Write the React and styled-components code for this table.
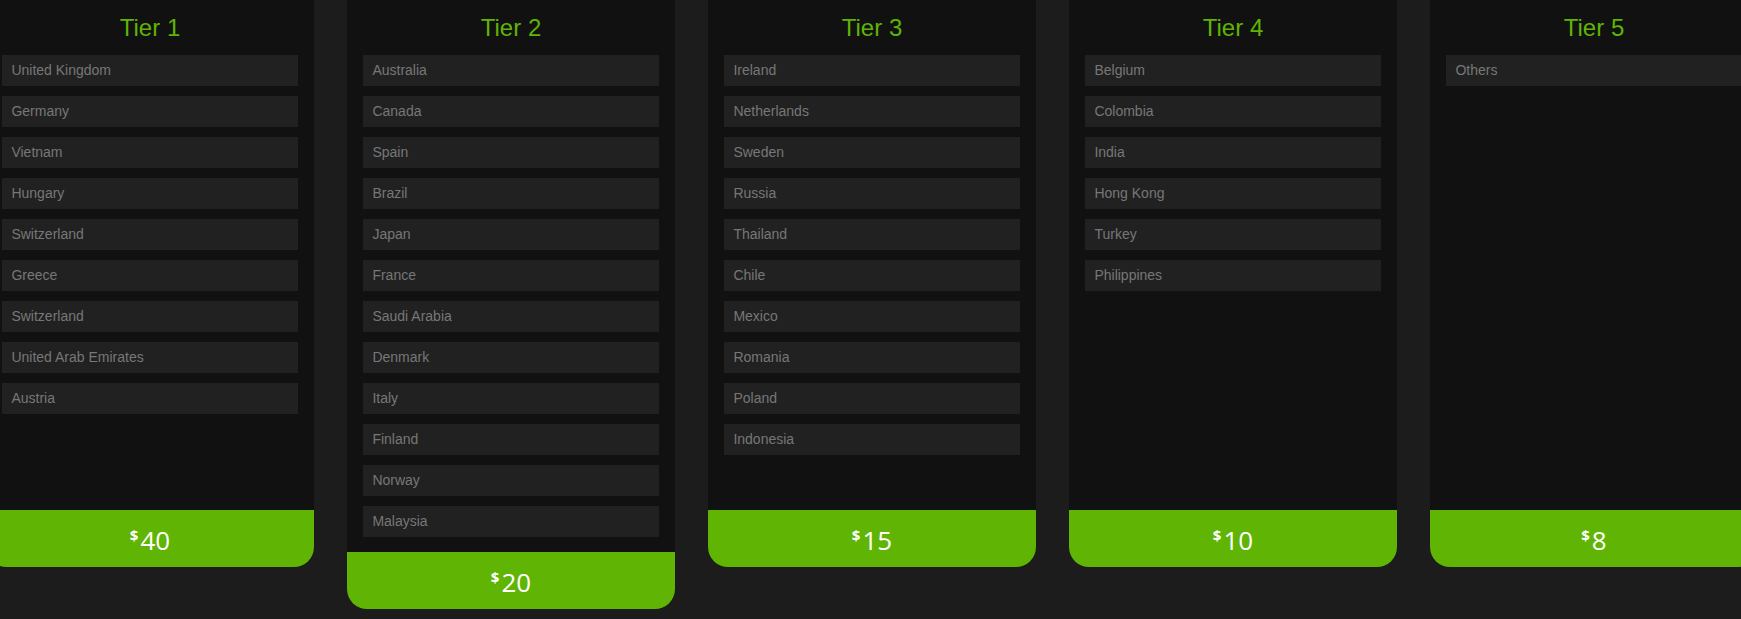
import React from 'react';
import styled, { createGlobalStyle } from 'styled-components';

const GlobalStyle = createGlobalStyle`
    body{
        margin: 0;
        background: #1c1c1c;
        font-family: "Liberation Sans", Arial, sans-serif;
        overflow: hidden;
    }
`;

const tiers = [
    { name: 'Tier 1', price: 40, countries: ['United Kingdom', 'Germany', 'Vietnam', 'Hungary', 'Switzerland', 'Greece', 'Switzerland', 'United Arab Emirates', 'Austria'] },
    { name: 'Tier 2', price: 20, countries: ['Australia', 'Canada', 'Spain', 'Brazil', 'Japan', 'France', 'Saudi Arabia', 'Denmark', 'Italy', 'Finland', 'Norway', 'Malaysia'] },
    { name: 'Tier 3', price: 15, countries: ['Ireland', 'Netherlands', 'Sweden', 'Russia', 'Thailand', 'Chile', 'Mexico', 'Romania', 'Poland', 'Indonesia'] },
    { name: 'Tier 4', price: 10, countries: ['Belgium', 'Colombia', 'India', 'Hong Kong', 'Turkey', 'Philippines'] },
    { name: 'Tier 5', price: 8, countries: ['Others'] },
];

function App() {
    return (
        <>
            <GlobalStyle />
            <Row>
                {tiers.map((tier) => {
                    return (
                        <Card key={tier.name}>
                            <Title>{tier.name}</Title>
                            <List>
                                {tier.countries.map((country, i) => (
                                    <Country key={i}>{country}</Country>
                                ))}
                            </List>
                            <Price>
                                <sup>$</sup>{tier.price}
                            </Price>
                        </Card>
                    )
                })}
            </Row>
        </>
    )
}

const Row = styled.div`
    display: flex;
    align-items: flex-start;
    gap: 33px;
    margin-left: -14px;
`;

const Card = styled.div`
    flex: 0 0 328px;
    min-height: 567px;
    background: #111111;
    display: flex;
    flex-direction: column;
    border-radius: 0 0 20px 20px;
`;

const Title = styled.h2`
    margin: 14px 0 13px;
    font-size: 24px;
    line-height: 28px;
    font-weight: normal;
    text-align: center;
    color: #5fb404;
`;

const List = styled.ul`
    flex: 1;
    list-style: none;
    margin: 0;
    padding: 0 0 5px;
`;

const Country = styled.li`
    width: 90%;
    height: 31px;
    margin: 0 auto 10px;
    padding-left: 9px;
    box-sizing: border-box;
    background: #212121;
    color: #777777;
    font-size: 14px;
    line-height: 31px;
`;

const Price = styled.div`
    height: 57px;
    box-sizing: border-box;
    padding-top: 3px;
    background: #60b504;
    border-radius: 0 0 20px 20px;
    color: #ffffff;
    font-family: "Open Sans", sans-serif;
    font-size: 26px;
    line-height: 54px;
    text-align: center;
    sup{
        font-size: 15px;
        font-weight: bold;
        vertical-align: 9px;
        line-height: 0;
        margin-right: 2px;
    }
`;

export default App
